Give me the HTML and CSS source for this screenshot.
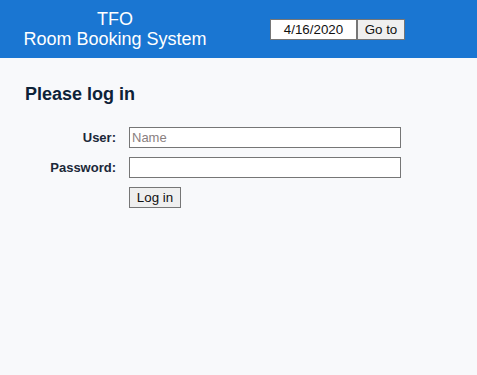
FILE: index.html
```html
<!DOCTYPE html>
<html>
  <head>
    <meta charset="UTF-8">
    <title>TFO Room Booking System</title>
    <link rel="stylesheet" href="styles.css">
  </head>
  <body>
    <div class="banner">
      <div class="title">TFO<br>Room Booking System</div>
      <form class="goto">
        <input type="text" class="date" value="4/16/2020">
        <button type="button" class="gobtn">Go to</button>
      </form>
    </div>

    <div class="content">
      <h2 class="heading">Please log in</h2>
      <form class="login">
        <label class="lbl" for="user">User:</label>
        <input type="text" id="user" class="field" placeholder="Name">
        <label class="lbl" for="pass">Password:</label>
        <input type="password" id="pass" class="field">
        <span></span>
        <div><button type="button" class="btn">Log in</button></div>
      </form>
    </div>
  </body>
</html>
```

FILE: styles.css
```css
body {
  margin: 0;
  font-family: "Liberation Sans", Arial, sans-serif;
  background-color: #f8f9fb;
  height: 375px;
}

.banner {
  display: flex;
  align-items: center;
  height: 58px;
  background-color: #1a76d2;
  color: #fff;
}

.title {
  width: 230px;
  text-align: center;
  font-size: 18px;
  line-height: 20px;
}

.goto {
  display: flex;
  margin: 0 0 0 40px;
}

.date {
  box-sizing: border-box;
  width: 87px;
  height: 21px;
  margin: 0;
  padding: 1px 2px;
  border: 1px solid #767676;
  background: #fff;
  font-family: inherit;
  font-size: 13.33px;
  text-align: center;
  color: #111;
}

.gobtn, .btn {
  box-sizing: border-box;
  height: 21px;
  margin: 0;
  padding: 1px 6px;
  border: 1px solid #767676;
  background-color: #efefef;
  font-family: inherit;
  font-size: 13.33px;
  color: #111;
  white-space: nowrap;
}

.gobtn {
  width: 48px;
}

.content {
  padding: 26px 25px 0;
}

.heading {
  margin: 0 0 22px;
  font-size: 18px;
  line-height: 21px;
  color: #0d2238;
}

.login {
  display: grid;
  grid-template-columns: 91px 272px;
  column-gap: 13px;
  row-gap: 9px;
  align-items: center;
}

.lbl {
  text-align: right;
  font-size: 13px;
  font-weight: bold;
  color: #1b2838;
}

.field {
  box-sizing: border-box;
  height: 21px;
  margin: 0;
  padding: 1px 2px;
  border: 1px solid #767676;
  background: #fff;
  font-family: inherit;
  font-size: 13px;
}

.field::placeholder {
  color: #8a7f7f;
}

.btn {
  width: 52px;
}
```
